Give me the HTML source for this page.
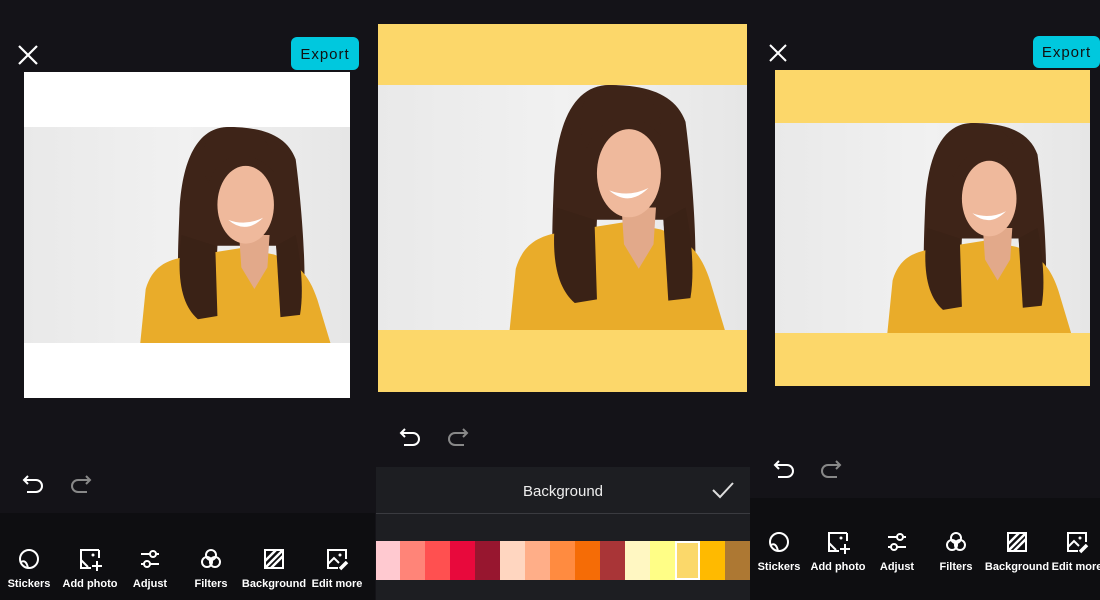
<!DOCTYPE html>
<html><head><meta charset="utf-8"><style>
*{margin:0;padding:0;box-sizing:border-box}
body{width:1100px;height:600px;overflow:hidden;background:#141318;font-family:"Liberation Sans",sans-serif;position:relative}
.abs{position:absolute}
.bar{background:#0e0e11}
.tool{position:absolute;width:70px;text-align:center;color:#fff;font-size:11px;font-weight:bold}
.tool svg{display:block;margin:0 auto 7px}
.export{background:#00c8de;color:#111;font-size:15px;letter-spacing:1px;border-radius:6px;text-align:center;line-height:35px}
</style></head><body>
<svg width="0" height="0" style="position:absolute"><defs>
<linearGradient id="bg" x1="0" x2="1"><stop offset="0" stop-color="#e9e9e9"/><stop offset=".5" stop-color="#f1f1f1"/><stop offset="1" stop-color="#e6e6e6"/></linearGradient>
<g id="photo">
<rect width="300" height="200" fill="url(#bg)"/>
<path d="M188 0 C160 0 145 30 143 80 C141 130 140 160 150 176 L175 176 L178 110 L232 110 L238 176 L256 176 C262 140 254 60 250 30 C242 8 220 0 188 0Z" fill="#3e2418"/>
<path d="M107 200 L112 150 C118 130 130 123 150 120 L200 112 L230 118 C250 125 262 135 270 160 L282 200Z" fill="#e9ac2a"/>
<path d="M198 100 L226 100 L224 130 L212 150 L200 130Z" fill="#e2a98a"/>
<ellipse cx="204" cy="72" rx="26" ry="36" fill="#efb99c"/>
<path d="M188 86 Q204 100 220 84 Q204 92 188 86Z" fill="#fff"/>
<path d="M188 0 C165 2 158 30 170 52 C180 22 210 18 230 42 C232 15 215 0 188 0Z" fill="#3e2418"/>
<path d="M145 100 C140 140 145 165 160 178 L178 175 L176 110Z" fill="#3a2216"/>
<path d="M232 110 L236 176 L254 174 C258 150 254 120 250 100Z" fill="#3a2216"/>
</g></defs></svg>

<!-- LEFT -->
<div class="abs bar" style="left:0;top:513px;width:375px;height:87px"></div>
<svg class="abs" style="left:17px;top:44px" width="22" height="22"><path d="M2 2L20 20M20 2L2 20" stroke="#fff" stroke-width="2.2"/></svg>
<div class="abs export" style="left:291px;top:37px;width:68px;height:33px">Export</div>
<div class="abs" style="left:24px;top:72px;width:326px;height:326px;background:#fff"></div>
<svg class="abs" style="left:24px;top:127px" width="326" height="216" viewBox="0 0 300 200" preserveAspectRatio="none"><use href="#photo"/></svg>
<svg class="abs" style="left:22px;top:472px" width="24" height="24"><path d="M6 4L2 8L6 12M2 8H14A6 6 0 0 1 14 20H5" fill="none" stroke="#fff" stroke-width="2"/></svg>
<svg class="abs" style="left:68px;top:472px" width="24" height="24"><path d="M18 4L22 8L18 12M22 8H10A6 6 0 0 0 10 20H19" fill="none" stroke="#888" stroke-width="2"/></svg>

<!-- MIDDLE -->
<div class="abs" style="left:375px;top:0;width:375px;height:600px;background:#141318"></div>
<div class="abs" style="left:378px;top:24px;width:369px;height:368px;background:#fcd76a"></div>
<svg class="abs" style="left:378px;top:85px" width="369" height="245" viewBox="0 0 300 200" preserveAspectRatio="none"><use href="#photo"/></svg>
<svg class="abs" style="left:399px;top:425px" width="24" height="24"><path d="M6 4L2 8L6 12M2 8H14A6 6 0 0 1 14 20H5" fill="none" stroke="#fff" stroke-width="2"/></svg>
<svg class="abs" style="left:445px;top:425px" width="24" height="24"><path d="M18 4L22 8L18 12M22 8H10A6 6 0 0 0 10 20H19" fill="none" stroke="#888" stroke-width="2"/></svg>
<div class="abs" style="left:376px;top:467px;width:374px;height:133px;background:#1d1e22"></div>
<div class="abs" style="left:376px;top:513px;width:374px;height:1px;background:#3a3b40"></div>
<div class="abs" style="left:376px;top:483px;width:374px;text-align:center;color:#eee;font-size:15px">Background</div>
<svg class="abs" style="left:710px;top:480px" width="26" height="20"><path d="M3 10L10 17L23 3" fill="none" stroke="#ddd" stroke-width="2"/></svg>
<div class="abs" style="left:376px;top:541px;height:39px;display:flex">
<div style="width:24px;background:#ffc9d0"></div><div style="width:25px;background:#ff8478"></div><div style="width:25px;background:#ff5050"></div><div style="width:25px;background:#e8093c"></div><div style="width:25px;background:#97162f"></div><div style="width:25px;background:#ffd6c0"></div><div style="width:25px;background:#ffae88"></div><div style="width:25px;background:#ff8b40"></div><div style="width:25px;background:#f56c06"></div><div style="width:25px;background:#a93537"></div><div style="width:25px;background:#fff7c2"></div><div style="width:25px;background:#fffe86"></div><div style="width:25px;background:#fbd86a;border:2px solid #fff"></div><div style="width:25px;background:#ffba00"></div><div style="width:25px;background:#ad7833"></div><div style="width:3px;background:#ffc9d0"></div>
</div>

<!-- RIGHT -->
<div class="abs" style="left:750px;top:0;width:350px;height:600px;background:#141318"></div>
<div class="abs bar" style="left:750px;top:498px;width:350px;height:102px"></div>
<svg class="abs" style="left:768px;top:43px" width="20" height="20"><path d="M2 2L18 18M18 2L2 18" stroke="#fff" stroke-width="2"/></svg>
<div class="abs export" style="left:1033px;top:36px;width:67px;height:32px;line-height:33px">Export</div>
<div class="abs" style="left:775px;top:70px;width:315px;height:316px;background:#fcd76a"></div>
<svg class="abs" style="left:775px;top:123px" width="315" height="210" viewBox="0 0 300 200" preserveAspectRatio="none"><use href="#photo"/></svg>
<svg class="abs" style="left:773px;top:457px" width="24" height="24"><path d="M6 4L2 8L6 12M2 8H14A6 6 0 0 1 14 20H5" fill="none" stroke="#fff" stroke-width="2"/></svg>
<svg class="abs" style="left:818px;top:457px" width="24" height="24"><path d="M18 4L22 8L18 12M22 8H10A6 6 0 0 0 10 20H19" fill="none" stroke="#888" stroke-width="2"/></svg>

<!-- toolbars -->
<div id="tb1"></div>
<script>
function tools(x0,xs,top){
 const icons=[
 '<circle cx="12" cy="12" r="9" fill="none" stroke="#fff" stroke-width="2"/><path d="M4 15Q9 12 11 21" fill="none" stroke="#fff" stroke-width="2"/>',
 '<path d="M12 3H3V21H13M21 3V11" fill="none" stroke="#fff" stroke-width="2"/><path d="M3 3H21M3 13L10 20" stroke="#fff" stroke-width="2"/><circle cx="15" cy="8" r="1.5" fill="#fff"/><path d="M19 14V24M14 19H24" stroke="#fff" stroke-width="2"/>',
 '<path d="M3 7H21M3 17H21" stroke="#fff" stroke-width="2"/><circle cx="15" cy="7" r="3" fill="#0e0e11" stroke="#fff" stroke-width="2"/><circle cx="9" cy="17" r="3" fill="#0e0e11" stroke="#fff" stroke-width="2"/>',
 '<circle cx="12" cy="8" r="5" fill="none" stroke="#fff" stroke-width="2"/><circle cx="8" cy="15" r="5" fill="none" stroke="#fff" stroke-width="2"/><circle cx="16" cy="15" r="5" fill="none" stroke="#fff" stroke-width="2"/>',
 '<rect x="3" y="3" width="18" height="18" fill="none" stroke="#fff" stroke-width="2"/><path d="M3 14L14 3M9 21L21 9M3 21L21 3" stroke="#fff" stroke-width="2.5"/>',
 '<path d="M13 21H3V3H21V12" fill="none" stroke="#fff" stroke-width="2"/><path d="M3 17L9 11L14 16" fill="none" stroke="#fff" stroke-width="2"/><circle cx="15" cy="8" r="1.5" fill="#fff"/><path d="M15 22L22 15" stroke="#fff" stroke-width="3.5"/>'];
 const names=['Stickers','Add photo','Adjust','Filters','Background','Edit more'];
 let h='';
 for(let i=0;i<6;i++)h+=`<div class="tool" style="left:${x0+xs[i]-35}px;top:${top}px"><svg width="24" height="24" viewBox="0 0 24 24">${icons[i]}</svg>${names[i]}</div>`;
 return h;
}
document.getElementById('tb1').outerHTML=tools(0,[29,90,150,211,274,337],547)+tools(750,[29,88,147,206,267,327],530);
</script>
</body></html>
